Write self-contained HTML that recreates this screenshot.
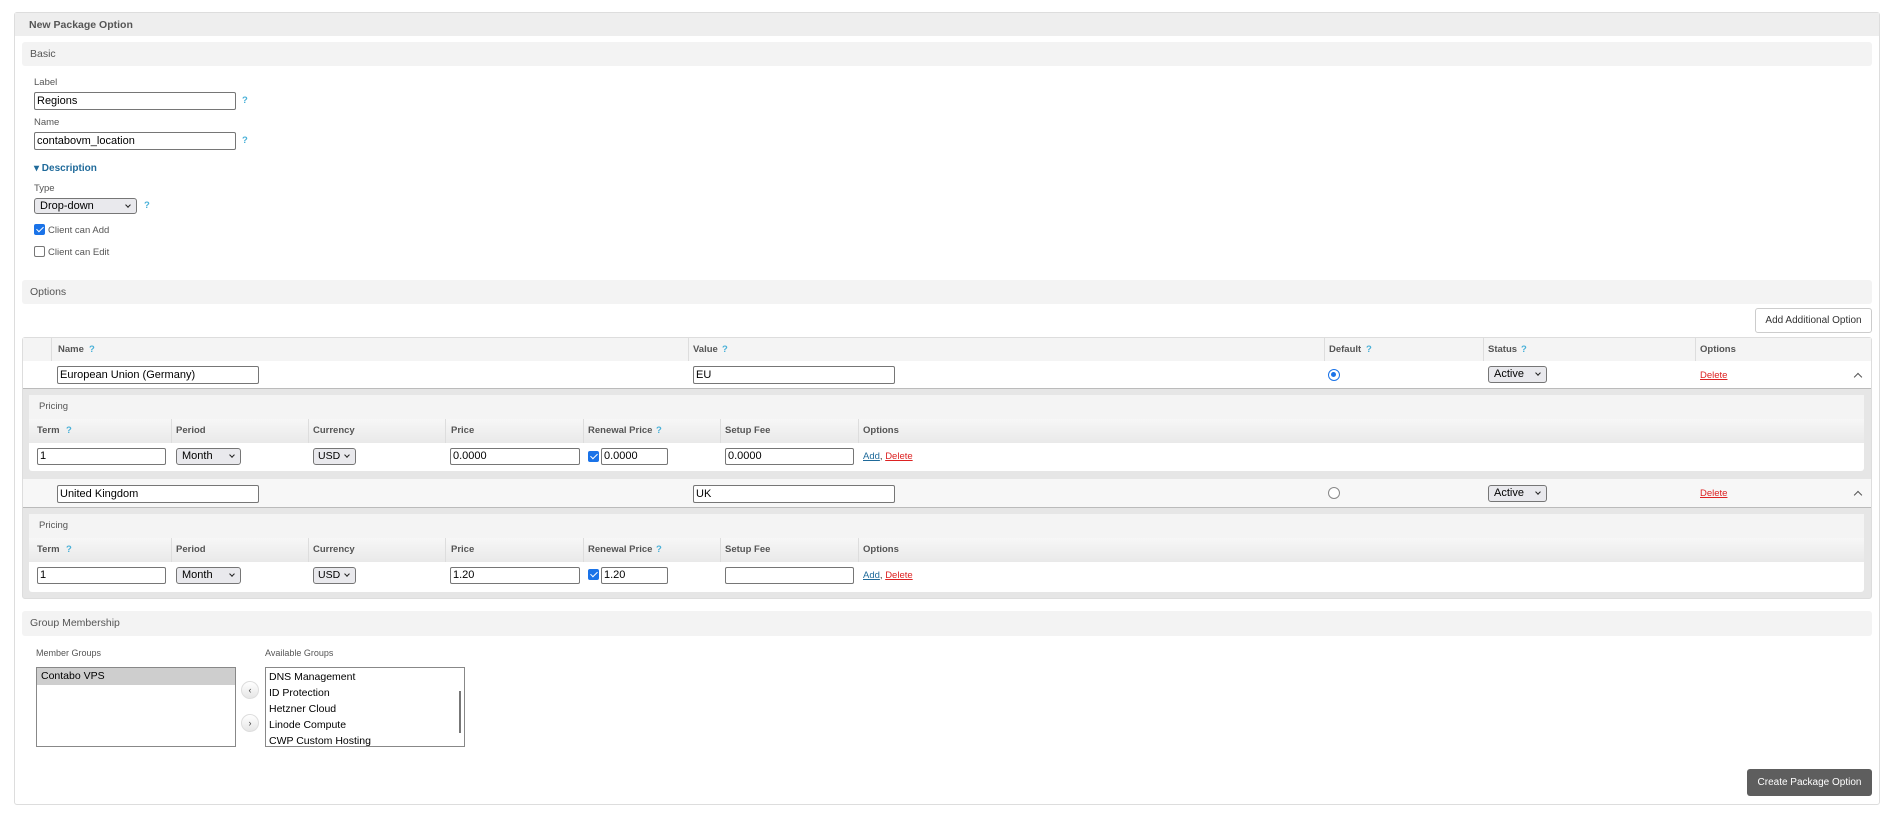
<!DOCTYPE html>
<html><head><meta charset="utf-8"><style>
*{box-sizing:border-box;margin:0;padding:0}
body{width:1886px;height:821px;background:#fff;font-family:"Liberation Sans",sans-serif;color:#333;position:relative;overflow:hidden}
.a{position:absolute}
.lbl{font-size:9.5px;color:#555}
.bar{position:absolute;background:#f3f3f3;border-radius:3px;font-size:10.5px;color:#555;padding-left:8px}
.inp{position:absolute;border:1px solid #767676;border-radius:2px;background:#fff;font-size:11px;color:#000;padding-left:2px;line-height:16px;height:18px;white-space:nowrap}
.sel{position:absolute;border:1px solid #767676;border-radius:3px;background:#e9e9ed;font-size:11px;color:#000;padding-left:5px;line-height:15px;height:17px}
.sel:after{content:"";position:absolute;right:6px;top:4px;width:3px;height:3px;border-right:1.2px solid #222;border-bottom:1.2px solid #222;transform:rotate(45deg)}
.q{position:absolute;color:#48b0d8;font-size:9.5px;font-weight:bold}
.th{position:absolute;font-size:9.5px;color:#555;font-weight:bold}
.cb{position:absolute;width:11px;height:11px;border-radius:2px}
.cb.on{background:#1a73e8}
.cb.on:after{content:"";position:absolute;left:3.5px;top:1px;width:3px;height:6px;border-right:1.6px solid #fff;border-bottom:1.6px solid #fff;transform:rotate(45deg)}
.cb.off{border:1px solid #767676;background:#fff}
.del{position:absolute;color:#d22;text-decoration:underline;font-size:9.5px}
.add{color:#1f6a9a;text-decoration:underline}
.vl{position:absolute;width:1px;background:#ddd}
.chev{position:absolute;width:6px;height:6px;border-left:1.5px solid #555;border-top:1.5px solid #555;transform:rotate(45deg)}
</style></head><body>
<div class="a" style="left:14px;top:12px;width:1866px;height:793px;border:1px solid #ddd;border-radius:3px"></div>
<div class="a" style="left:15px;top:13px;width:1864px;height:23px;background:#eee"></div>
<div class="a" style="left:29px;top:19px;font-size:10.5px;font-weight:bold;color:#555">New Package Option</div>

<div class="bar" style="left:22px;top:42px;width:1850px;height:24px;line-height:24px">Basic</div>
<div class="a lbl" style="left:34px;top:77px">Label</div>
<div class="inp" style="left:34px;top:92px;width:202px">Regions</div>
<div class="q" style="left:242px;top:95px">?</div>
<div class="a lbl" style="left:34px;top:117px">Name</div>
<div class="inp" style="left:34px;top:132px;width:202px">contabovm_location</div>
<div class="q" style="left:242px;top:135px">?</div>
<div class="a" style="left:34px;top:163px;font-size:10px;font-weight:bold;color:#1f6a9a">&#9662; Description</div>
<div class="a lbl" style="left:34px;top:183px">Type</div>
<div class="sel" style="left:34px;top:198px;width:103px;height:16px;line-height:14px">Drop-down</div>
<div class="q" style="left:144px;top:200px">?</div>
<div class="cb on" style="left:34px;top:224px"></div>
<div class="a lbl" style="left:48px;top:225px">Client can Add</div>
<div class="cb off" style="left:34px;top:246px"></div>
<div class="a lbl" style="left:48px;top:247px">Client can Edit</div>

<div class="bar" style="left:22px;top:280px;width:1850px;height:24px;line-height:24px">Options</div>
<div class="a" style="left:1755px;top:308px;width:117px;height:25px;border:1px solid #ccc;border-radius:3px;font-size:10px;color:#333;line-height:23px;text-align:center">Add Additional Option</div>

<div class="a" style="left:22px;top:337px;width:1850px;height:262px;border:1px solid #ddd;border-radius:3px;background:#e6e6e6"></div>
<div class="a" style="left:23px;top:338px;width:1848px;height:23px;background:#f4f4f4"></div>
<div class="vl" style="left:51px;top:338px;height:23px"></div>
<div class="vl" style="left:688px;top:338px;height:23px"></div>
<div class="vl" style="left:1324px;top:338px;height:23px"></div>
<div class="vl" style="left:1483px;top:338px;height:23px"></div>
<div class="vl" style="left:1695px;top:338px;height:23px"></div>
<div class="th" style="left:58px;top:344px">Name</div><div class="q" style="left:89px;top:344px">?</div>
<div class="th" style="left:693px;top:344px">Value</div><div class="q" style="left:722px;top:344px">?</div>
<div class="th" style="left:1329px;top:344px">Default</div><div class="q" style="left:1366px;top:344px">?</div>
<div class="th" style="left:1488px;top:344px">Status</div><div class="q" style="left:1521px;top:344px">?</div>
<div class="th" style="left:1700px;top:344px">Options</div>

<!-- row 1 -->
<div class="a" style="left:23px;top:361px;width:1848px;height:28px;background:#fff;border-bottom:1px solid #bbb"></div>
<div class="inp" style="left:57px;top:366px;width:202px">European Union (Germany)</div>
<div class="inp" style="left:693px;top:366px;width:202px">EU</div>
<div class="a" style="left:1328px;top:369px;width:12px;height:12px;border-radius:50%;border:1.5px solid #1a73e8;background:#fff"><div class="a" style="left:2px;top:2px;width:5px;height:5px;border-radius:50%;background:#1a73e8"></div></div>
<div class="sel" style="left:1488px;top:366px;width:59px;height:17px">Active</div>
<div class="del" style="left:1700px;top:370px">Delete</div>
<div class="chev" style="left:1855px;top:374px"></div>

<div class="a" style="left:29px;top:395px;width:1835px;height:76px;background:#fff;border-radius:3px"></div>
<div class="a" style="left:29px;top:395px;width:1835px;height:24px;background:#f4f4f4"></div>
<div class="a" style="left:39px;top:401px;font-size:9.5px;color:#555">Pricing</div>
<div class="a" style="left:29px;top:419px;width:1835px;height:24px;background:linear-gradient(#f7f7f7,#e9e9e9)"></div>
<div class="vl" style="left:171px;top:419px;height:24px"></div><div class="vl" style="left:308px;top:419px;height:24px"></div><div class="vl" style="left:445px;top:419px;height:24px"></div><div class="vl" style="left:583px;top:419px;height:24px"></div><div class="vl" style="left:720px;top:419px;height:24px"></div><div class="vl" style="left:858px;top:419px;height:24px"></div>
<div class="th" style="left:37px;top:425px">Term</div><div class="q" style="left:66px;top:425px">?</div>
<div class="th" style="left:176px;top:425px">Period</div>
<div class="th" style="left:313px;top:425px">Currency</div>
<div class="th" style="left:451px;top:425px">Price</div>
<div class="th" style="left:588px;top:425px">Renewal Price</div><div class="q" style="left:656px;top:425px">?</div>
<div class="th" style="left:725px;top:425px">Setup Fee</div>
<div class="th" style="left:863px;top:425px">Options</div>
<div class="inp" style="left:37px;top:448px;width:129px;height:17px;line-height:15px">1</div>
<div class="sel" style="left:176px;top:448px;width:65px;height:17px">Month</div>
<div class="sel" style="left:313px;top:448px;width:43px;height:17px;font-size:10.5px;padding-left:4px">USD</div>
<div class="inp" style="left:450px;top:448px;width:130px;height:17px;line-height:15px">0.0000</div>
<div class="cb on" style="left:588px;top:451px"></div>
<div class="inp" style="left:601px;top:448px;width:67px;height:17px;line-height:15px">0.0000</div>
<div class="inp" style="left:725px;top:448px;width:129px;height:17px;line-height:15px">0.0000</div>
<div class="a" style="left:863px;top:451px;font-size:9.5px"><span class="add">Add</span>, <span style="color:#d22;text-decoration:underline">Delete</span></div>

<!-- row 2 -->
<div class="a" style="left:23px;top:479px;width:1848px;height:29px;background:#f7f7f7;border-bottom:1px solid #bbb"></div>
<div class="inp" style="left:57px;top:485px;width:202px">United Kingdom</div>
<div class="inp" style="left:693px;top:485px;width:202px">UK</div>
<div class="a" style="left:1328px;top:487px;width:12px;height:12px;border-radius:50%;border:1px solid #888;background:#fff"></div>
<div class="sel" style="left:1488px;top:485px;width:59px;height:17px">Active</div>
<div class="del" style="left:1700px;top:488px">Delete</div>
<div class="chev" style="left:1855px;top:492px"></div>

<div class="a" style="left:29px;top:514px;width:1835px;height:78px;background:#fff;border-radius:3px"></div>
<div class="a" style="left:29px;top:514px;width:1835px;height:24px;background:#f4f4f4"></div>
<div class="a" style="left:39px;top:520px;font-size:9.5px;color:#555">Pricing</div>
<div class="a" style="left:29px;top:538px;width:1835px;height:24px;background:linear-gradient(#f7f7f7,#e9e9e9)"></div>
<div class="vl" style="left:171px;top:538px;height:24px"></div><div class="vl" style="left:308px;top:538px;height:24px"></div><div class="vl" style="left:445px;top:538px;height:24px"></div><div class="vl" style="left:583px;top:538px;height:24px"></div><div class="vl" style="left:720px;top:538px;height:24px"></div><div class="vl" style="left:858px;top:538px;height:24px"></div>
<div class="th" style="left:37px;top:544px">Term</div><div class="q" style="left:66px;top:544px">?</div>
<div class="th" style="left:176px;top:544px">Period</div>
<div class="th" style="left:313px;top:544px">Currency</div>
<div class="th" style="left:451px;top:544px">Price</div>
<div class="th" style="left:588px;top:544px">Renewal Price</div><div class="q" style="left:656px;top:544px">?</div>
<div class="th" style="left:725px;top:544px">Setup Fee</div>
<div class="th" style="left:863px;top:544px">Options</div>
<div class="inp" style="left:37px;top:567px;width:129px;height:17px;line-height:15px">1</div>
<div class="sel" style="left:176px;top:567px;width:65px;height:17px">Month</div>
<div class="sel" style="left:313px;top:567px;width:43px;height:17px;font-size:10.5px;padding-left:4px">USD</div>
<div class="inp" style="left:450px;top:567px;width:130px;height:17px;line-height:15px">1.20</div>
<div class="cb on" style="left:588px;top:569px"></div>
<div class="inp" style="left:601px;top:567px;width:67px;height:17px;line-height:15px">1.20</div>
<div class="inp" style="left:725px;top:567px;width:129px;height:17px"></div>
<div class="a" style="left:863px;top:570px;font-size:9.5px"><span class="add">Add</span>, <span style="color:#d22;text-decoration:underline">Delete</span></div>

<!-- group -->
<div class="bar" style="left:22px;top:611px;width:1850px;height:25px;line-height:25px">Group Membership</div>
<div class="a lbl" style="left:36px;top:648px;font-size:9px">Member Groups</div>
<div class="a" style="left:36px;top:667px;width:200px;height:80px;border:1px solid #888;background:#fff"><div style="background:#cecece;height:17px;font-size:10.5px;line-height:17px;padding-left:4px;color:#000">Contabo VPS</div></div>
<div class="a" style="left:241px;top:681px;width:18px;height:18px;border-radius:50%;background:linear-gradient(#fff,#e6e6e6);border:1px solid #ddd;font-size:9px;text-align:center;line-height:16px;color:#444">&lsaquo;</div>
<div class="a" style="left:241px;top:714px;width:18px;height:18px;border-radius:50%;background:linear-gradient(#fff,#e6e6e6);border:1px solid #ddd;font-size:9px;text-align:center;line-height:16px;color:#444">&rsaquo;</div>
<div class="a lbl" style="left:265px;top:648px;font-size:9px">Available Groups</div>
<div class="a" style="left:265px;top:667px;width:200px;height:80px;border:1px solid #888;background:#fff;overflow:hidden;font-size:10.5px;color:#000;line-height:16px;padding:1px 0 0 3px">DNS Management<br>ID Protection<br>Hetzner Cloud<br>Linode Compute<br>CWP Custom Hosting</div>
<div class="a" style="left:459px;top:691px;width:2px;height:42px;background:#777"></div>

<div class="a" style="left:1747px;top:769px;width:125px;height:27px;background:#5e5e5e;border-radius:3px;color:#fff;font-size:10px;text-align:center;line-height:27px">Create Package Option</div>
</body></html>
